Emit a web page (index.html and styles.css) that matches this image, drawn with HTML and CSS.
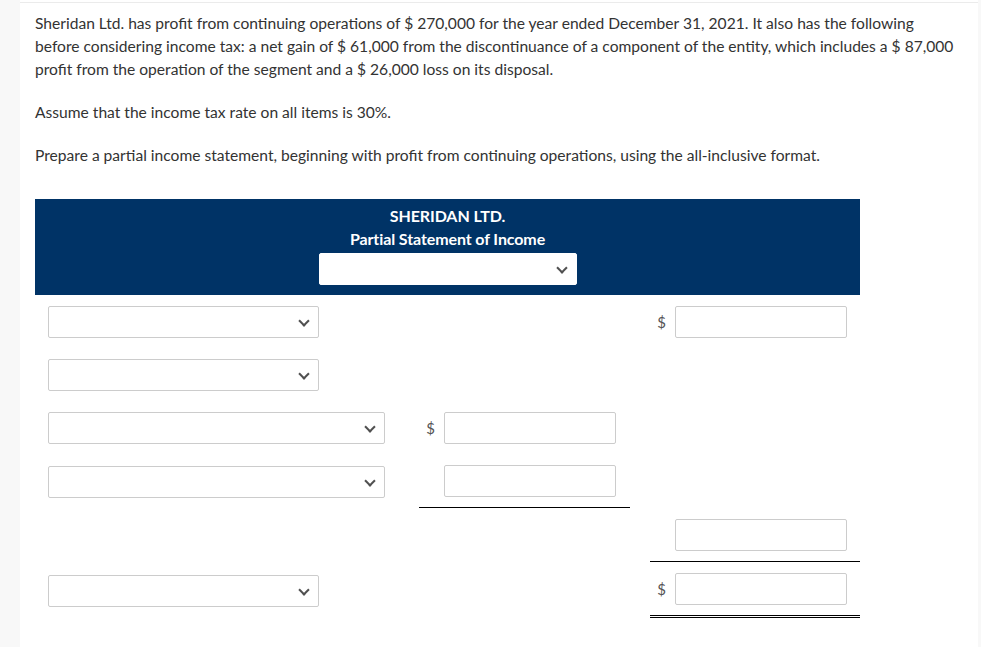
FILE: index.html
```html
<!DOCTYPE html>
<html>
<head>
<meta charset="utf-8">
<link rel="stylesheet" href="styles.css">
</head>
<body>
<div class="page">
  <div class="topline"></div>
  <div class="content">
    <p class="para">Sheridan Ltd. has profit from continuing operations of $&nbsp;270,000 for the year ended December 31, 2021. It also has the following before considering income tax: a net gain of $&nbsp;61,000 from the discontinuance of a component of the entity, which includes a $&nbsp;87,000 profit from the operation of the segment and a $&nbsp;26,000 loss on its disposal.</p>
    <p class="para">Assume that the income tax rate on all items is 30%.</p>
    <p class="para">Prepare a partial income statement, beginning with profit from continuing operations, using the all-inclusive format.</p>

    <div class="statement">
      <div class="header">
        <div class="title">SHERIDAN LTD.</div>
        <div class="title">Partial Statement of Income</div>
        <div class="select select-head"><span class="chev"></span></div>
      </div>
      <div class="grid">
        <!-- row 1 -->
        <div class="cell c1"><div class="select w-short"><span class="chev"></span></div></div>
        <div class="cell c2"></div>
        <div class="cell gap"></div>
        <div class="cell c3"><span class="dollar">$</span><div class="input"></div></div>
        <!-- row 2 -->
        <div class="cell c1"><div class="select w-short"><span class="chev"></span></div></div>
        <div class="cell c2"></div>
        <div class="cell gap"></div>
        <div class="cell c3"></div>
        <!-- row 3 -->
        <div class="cell c1"><div class="select w-long"><span class="chev"></span></div></div>
        <div class="cell c2"><span class="dollar">$</span><div class="input"></div></div>
        <div class="cell gap"></div>
        <div class="cell c3"></div>
        <!-- row 4 -->
        <div class="cell c1"><div class="select w-long"><span class="chev"></span></div></div>
        <div class="cell c2 line"><div class="input"></div></div>
        <div class="cell gap"></div>
        <div class="cell c3"></div>
        <!-- row 5 -->
        <div class="cell c1"></div>
        <div class="cell c2"></div>
        <div class="cell gap"></div>
        <div class="cell c3 line"><div class="input"></div></div>
        <!-- row 6 -->
        <div class="cell c1"><div class="select w-short"><span class="chev"></span></div></div>
        <div class="cell c2"></div>
        <div class="cell gap"></div>
        <div class="cell c3 dline"><span class="dollar">$</span><div class="input"></div></div>
      </div>
    </div>
  </div>
</div>
</body>
</html>
```
FILE: styles.css
```css
html, body {
  margin: 0;
  padding: 0;
}
body {
  background: #f8f8f8;
  font-family: Lato, "Liberation Sans", sans-serif;
  color: #333333;
}
.page {
  margin-left: 20px;
  width: 958px;
  min-height: 647px;
  background: #ffffff;
  padding-top: 2px;
}
.topline {
  border-top: 1px solid #ebebeb;
}
.content {
  padding: 9px 0 0 15px;
}
.para {
  margin: 0 0 20px 0;
  font-size: 15.6px;
  line-height: 23px;
  width: 925px;
}
.statement {
  width: 825px;
  margin-top: 32px;
}
.header {
  background: #003366;
  color: #ffffff;
  display: flex;
  flex-direction: column;
  align-items: center;
  padding: 5px 0 10px 0;
}
.title {
  font-weight: 700;
  font-size: 16px;
  line-height: 23px;
  letter-spacing: -0.1px;
}
.select {
  position: relative;
  height: 32px;
  box-sizing: border-box;
  border: 1px solid #cccccc;
  border-radius: 2px;
  background: #ffffff;
}
.select-head {
  width: 258px;
  margin-top: 3px;
  border-color: #ffffff;
}
.w-short { width: 271px; }
.w-long { width: 337px; }
.chev {
  position: absolute;
  right: 10px;
  top: 10px;
  width: 6px;
  height: 6px;
  border-right: 2px solid #505050;
  border-bottom: 2px solid #505050;
  transform: rotate(45deg);
}
.grid {
  display: grid;
  grid-template-columns: 384px 211px 20px 210px;
}
.cell {
  padding: 11px 0 10px 0;
  min-height: 32px;
  display: flex;
  align-items: center;
}
.c1 {
  padding-left: 13px;
}
.c2 {
  justify-content: flex-end;
  padding-right: 14px;
}
.c3 {
  justify-content: flex-end;
  padding-right: 13px;
}
.input {
  width: 172px;
  height: 32px;
  box-sizing: border-box;
  border: 1px solid #cccccc;
  border-radius: 2px;
  background: #ffffff;
}
.dollar {
  font-size: 15px;
  color: #555555;
  margin-right: 9px;
}
.line {
  border-bottom: 1px solid #000000;
}
.dline {
  border-bottom: 3px double #000000;
}
```
